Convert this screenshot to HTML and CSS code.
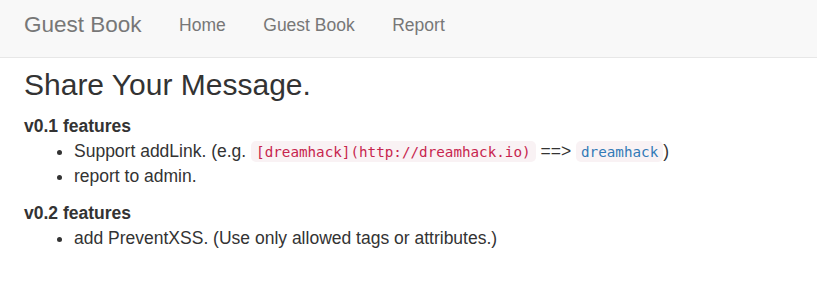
FILE: index.html
```html
<!DOCTYPE html>
<html lang="en">
<head>
    <meta charset="UTF-8">
    <meta name="viewport" content="width=device-width, initial-scale=1.0">
    <title>Guest Book</title>
    <link rel="stylesheet" href="styles.css">
</head>
<body>
<nav class="navbar">
    <a class="brand" href="#">Guest Book</a>
    <ul class="nav">
        <li><a href="#">Home</a></li>
        <li><a href="#">Guest Book</a></li>
        <li><a href="#">Report</a></li>
    </ul>
</nav>
<div class="container">
    <h2 class="title">Share Your Message.</h2>
    <div class="feature">
        <b>v0.1 features</b>
        <ul>
            <li>Support addLink. (e.g. <code>[dreamhack](http://dreamhack.io)</code> ==&gt; <code class="link">dreamhack</code>)</li>
            <li>report to admin.</li>
        </ul>
    </div>
    <div class="feature">
        <b>v0.2 features</b>
        <ul>
            <li>add PreventXSS. (Use only allowed tags or attributes.)</li>
        </ul>
    </div>
</div>
</body>
</html>
```

FILE: styles.css
```css
body {
    margin: 0;
    font: 17.5px/25px "Liberation Sans", Arial, sans-serif;
    color: #333;
    background: #fff;
}

a {
    text-decoration: none;
}

.navbar {
    display: flex;
    align-items: flex-start;
    height: 57px;
    padding-left: 5.25px;
    background: #f8f8f8;
    border-bottom: 1px solid #e7e7e7;
}

.brand {
    display: block;
    padding: 12px 18.75px;
    font-size: 22.5px;
    line-height: 25px;
    color: #777;
}

.nav {
    display: flex;
    margin: 0;
    padding: 0;
    list-style: none;
}

.nav a {
    display: block;
    padding: 12.5px 18.75px;
    line-height: 25px;
    color: #777;
}

.container {
    padding: 0 24px;
}

.title {
    margin: 10px 0 12.5px;
    font-size: 30px;
    font-weight: 500;
    line-height: 33px;
}

.feature ul {
    margin: 0 0 12.5px;
    padding-left: 50px;
}

code {
    padding: 2.5px 5px;
    font: 14.25px "DejaVu Sans Mono", Consolas, monospace;
    color: #c7254e;
    background: #f9f2f4;
    border-radius: 5px;
}

code.link {
    color: #337ab7;
}
```
